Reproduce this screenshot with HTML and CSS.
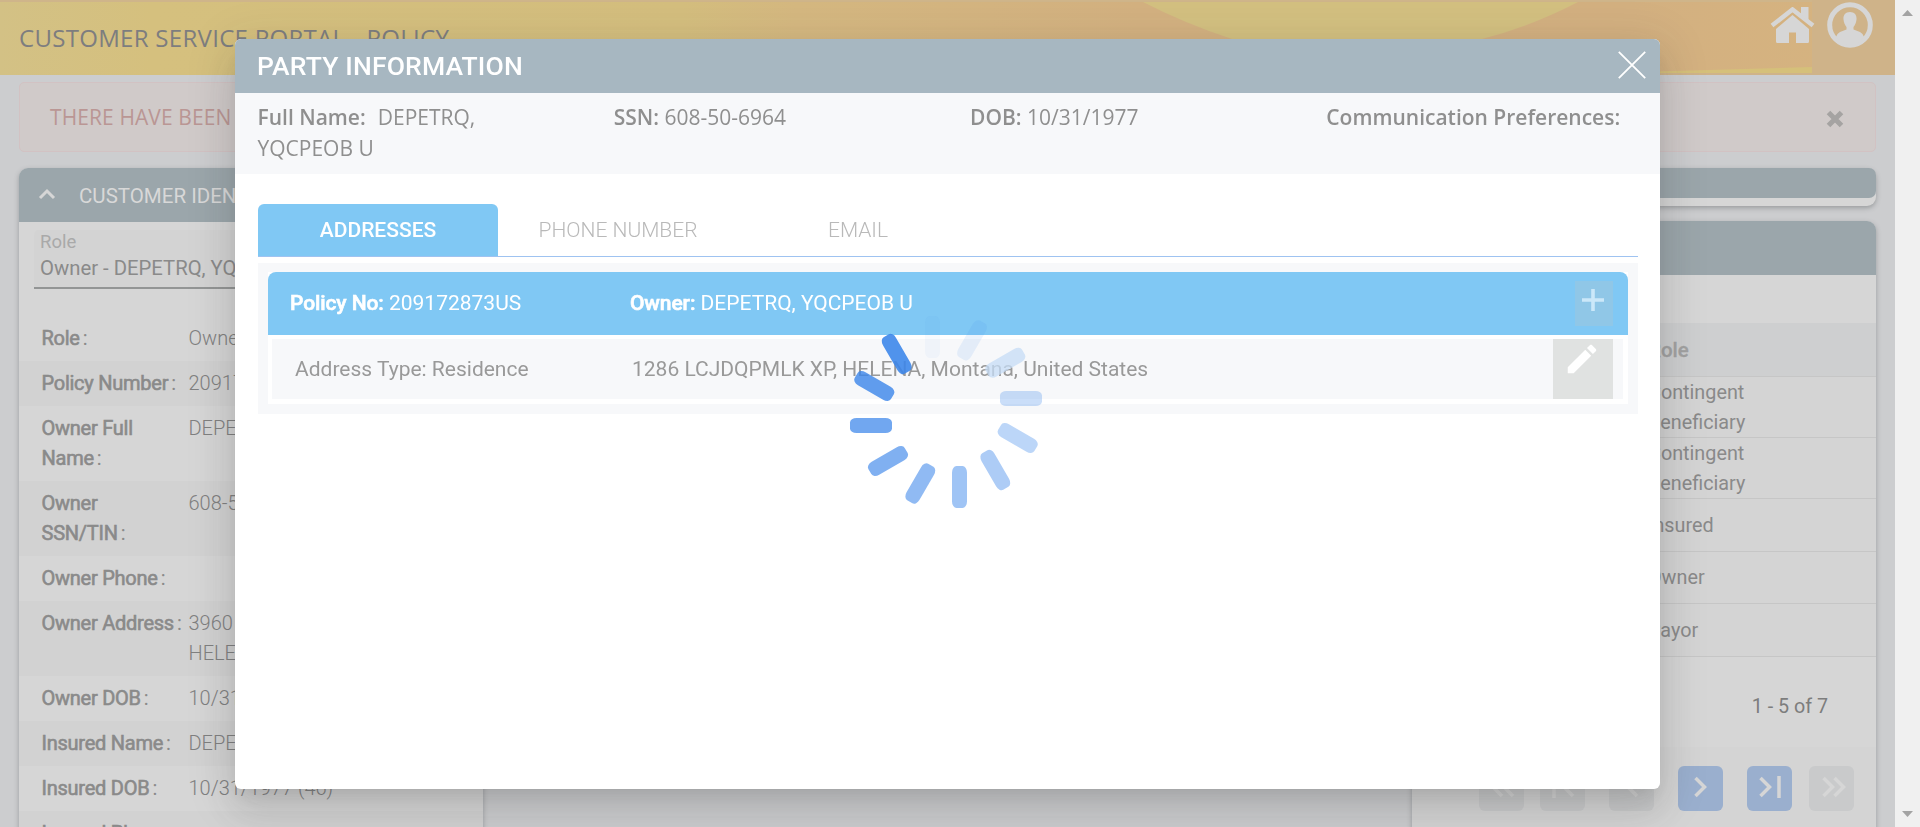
FILE: index.html
```html
<!DOCTYPE html>
<html lang="en">
<head>
<meta charset="utf-8">
<title>Customer Service Portal - Policy</title>
<link rel="stylesheet" href="styles.css">
</head>
<body>
<div class="app">
  <header class="topbar">
    <svg class="topbar-art" viewBox="0 0 1895 75" preserveAspectRatio="none" aria-hidden="true">
      <defs>
        <linearGradient id="band" x1="0" x2="1" y1="0" y2="0">
          <stop offset="0" stop-color="#d3c185"/>
          <stop offset=".08" stop-color="#d5c07e"/>
          <stop offset=".36" stop-color="#d4be7e"/>
          <stop offset=".42" stop-color="#d5b880"/>
          <stop offset=".6" stop-color="#d3b180"/>
          <stop offset=".86" stop-color="#d3b080"/>
          <stop offset="1" stop-color="#d6b480"/>
        </linearGradient>
      </defs>
      <rect width="1895" height="75" fill="url(#band)"/>
      <path d="M1143 2Q1186 24 1232 39Q1357 72 1482 39Q1532 26 1578 2Z" fill="#d3c080"/>
      <path d="M1600 73L1812 67V73Z" fill="#d5c07a"/>
      <rect width="1895" height="2" fill="#cfb58a"/>
      <rect x="1660" y="73" width="235" height="2" fill="#cfb389"/>
      <rect x="1812" width="83" height="75" fill="#cfb389"/>
    </svg>
    <h1 class="topbar-title">CUSTOMER SERVICE PORTAL - POLICY</h1>
    <nav class="topbar-icons">
      <svg width="45" height="37" viewBox="0 0 45 37"><path d="M22.500 8L6 22V34.500Q6 36 7.500 36H19V25.500H26V36H37.500Q39 36 39 34.500V22Z" fill="#d6d6d6"/><path d="M2 18.500L22.500 2.500L43 18.500" fill="none" stroke="#d6d6d6" stroke-width="4.500"/><path d="M31 0H38.500V14L31 8Z" fill="#d6d6d6"/><path d="M5 21.500L22.500 6.500L40 21.500" fill="none" stroke="#d3b180" stroke-width="1"/></svg>
      <svg width="46" height="46" viewBox="0 0 46 46"><circle cx="23" cy="23" r="20.300" fill="none" stroke="#d6d6d6" stroke-width="5"/><path d="M23 10C27.500 10 30 13 29.500 17.500C29.200 21 28 23 26.500 25V27.500L33 30Q36 31.500 37 35Q31 43 23 43Q15 43 9 35Q10 31.500 13 30L19.500 27.500V25C18 23 16.800 21 16.500 17.500C16 13 18.500 10 23 10Z" fill="#d6d6d6"/></svg>
    </nav>
  </header>

  <div class="alert">
    <span class="alert-text">THERE HAVE BEEN</span>
    <svg width="18" height="18" viewBox="0 0 18 18"><path d="M2.500 2.500L15.500 15.500M15.500 2.500L2.500 15.500" stroke="#a5a3a2" stroke-width="5"/></svg>
  </div>

  <main class="columns">
    <section class="card customer">
      <div class="card-head">
        <svg width="18" height="12" viewBox="0 0 18 12"><path d="M2 10L9 3L16 10" fill="none" stroke="#d6d6d6" stroke-width="3"/></svg>
        <h2 class="card-title">CUSTOMER IDENTIFICATION</h2>
      </div>
      <div class="select">
        <span class="select-label">Role</span>
        <span class="select-value">Owner - DEPETRQ, YQCPEOB U</span>
      </div>
      <dl class="facts">
        <div class="fact"><dt>Role<i>:</i></dt><dd>Owner</dd></div>
        <div class="fact"><dt>Policy Number<i>:</i></dt><dd>209172873US</dd></div>
        <div class="fact"><dt>Owner Full<br>Name<i>:</i></dt><dd>DEPETRQ, YQCPEOB U</dd></div>
        <div class="fact"><dt>Owner<br>SSN/TIN<i>:</i></dt><dd>608-50-6964</dd></div>
        <div class="fact"><dt>Owner Phone<i>:</i></dt><dd></dd></div>
        <div class="fact"><dt>Owner Address<i>:</i></dt><dd>3960 <br>HELENA</dd></div>
        <div class="fact"><dt>Owner DOB<i>:</i></dt><dd>10/31/1977 (46)</dd></div>
        <div class="fact"><dt>Insured Name<i>:</i></dt><dd>DEPETRQ, YQCPEOB U</dd></div>
        <div class="fact"><dt>Insured DOB<i>:</i></dt><dd>10/31/1977 (46)</dd></div>
        <div class="fact"><dt>Insured Phone<i>:</i></dt><dd></dd></div>
      </dl>
    </section>

    <div class="side">
      <section class="card collapsed"><div class="collapsed-head"></div></section>
      <section class="card roles">
        <div class="card-head"></div>
        <div class="table">
          <div class="row row-head">Role</div>
          <div class="row row-tall">Contingent<br>Beneficiary</div>
          <div class="row row-tall">Contingent<br>Beneficiary</div>
          <div class="row">Insured</div>
          <div class="row">Owner</div>
          <div class="row">Payor</div>
        </div>
        <div class="count">1 - 5 of 7</div>
        <div class="pager">
          <span class="page-btn first"><svg viewBox="0 0 45 45"><path d="M23 12L14 21L23 30M34 12L25 21L34 30"/></svg></span>
          <span class="page-btn start"><svg viewBox="0 0 45 45"><path d="M14 10V32M33 12L24 21L33 30"/></svg></span>
          <span class="page-btn prev"><svg viewBox="0 0 45 45"><path d="M28 12L19 21L28 30"/></svg></span>
          <span class="page-btn next active"><svg viewBox="0 0 45 45"><path d="M17.500 12L26.500 21L17.500 30"/></svg></span>
          <span class="page-btn end active"><svg viewBox="0 0 45 45"><path d="M13.500 12L22.500 21L13.500 30M32 10V32"/></svg></span>
          <span class="page-btn last"><svg viewBox="0 0 45 45"><path d="M14.500 12L23.500 21L14.500 30M25.500 12L34.500 21L25.500 30"/></svg></span>
        </div>
      </section>
    </div>
  </main>
</div>

<aside class="scrollbar">
  <svg width="11" height="6" viewBox="0 0 11 6"><path d="M0 6L5.500 0L11 6Z" fill="#a3a3a3"/></svg>
  <svg width="11" height="6" viewBox="0 0 11 6"><path d="M0 0L5.500 6L11 0Z" fill="#a3a3a3"/></svg>
</aside>

<div class="dialog" role="dialog">
  <div class="dialog-head">
    <h2 class="dialog-title">PARTY INFORMATION</h2>
    <svg width="28" height="28" viewBox="0 0 28 28"><path d="M.8 .8L27.200 27.200M27.200 .8L.8 27.200" stroke="#fff" stroke-width="1.800"/></svg>
  </div>
  <div class="party">
    <div class="party-cell"><b class="name-label">Full Name:</b><span class="name">DEPETRQ,<br></span><span>YQCPEOB U</span></div>
    <div class="party-cell"><b>SSN:</b> 608-50-6964</div>
    <div class="party-cell"><b>DOB:</b> 10/31/1977</div>
    <div class="party-cell"><b>Communication Preferences:</b></div>
  </div>
  <div class="tabs">
    <div class="tab selected">ADDRESSES</div>
    <div class="tab">PHONE NUMBER</div>
    <div class="tab">EMAIL</div>
  </div>
  <div class="panel">
    <div class="policy">
      <div class="policy-head">
        <span class="policy-no"><b>Policy No:</b> 209172873US</span>
        <span class="policy-owner"><b>Owner:</b> DEPETRQ, YQCPEOB U</span>
        <span class="add"><svg width="22" height="22" viewBox="0 0 22 22"><path d="M0 11H22M11 0V22" stroke="#cbe8f9" stroke-width="3.600"/></svg></span>
      </div>
      <div class="address">
        <span class="address-type">Address Type: Residence</span>
        <span class="address-text">1286 LCJDQPMLK XP, HELENA, Montana, United States</span>
        <span class="edit"><svg width="38" height="38" viewBox="0 0 24 24"><path fill="#fff" d="M3 17.250V21h3.750L17.810 9.940l-3.750-3.750L3 17.250zM20.710 7.040c.39-.39.39-1.020 0-1.410l-2.340-2.340c-.39-.39-1.020-.39-1.410 0l-1.830 1.830 3.750 3.750 1.830-1.830z"/></svg></span>
      </div>
    </div>
  </div>
</div>

<svg class="spinner" width="194" height="194" viewBox="849 315 194 194" aria-label="Loading">
  <defs><rect id="bar" x="-7.500" y="-21" width="15" height="42" rx="4.500" ry="6.500"/></defs>
  <g fill="#3c86ea">
    <use href="#bar" transform="translate(932.500 337)" opacity=".04"/>
    <use href="#bar" transform="translate(972 340.300) rotate(30)" opacity=".1"/>
    <use href="#bar" transform="translate(1005.300 362.700) rotate(60)" fill="#c6dcf5" opacity=".75"/>
    <use href="#bar" transform="translate(1021 398.500) rotate(90)" opacity=".27"/>
    <use href="#bar" transform="translate(1017.700 438) rotate(120)" opacity=".34"/>
    <use href="#bar" transform="translate(995.300 470) rotate(150)" opacity=".42"/>
    <use href="#bar" transform="translate(959.500 487)" opacity=".49"/>
    <use href="#bar" transform="translate(920.300 483.500) rotate(30)" opacity=".57"/>
    <use href="#bar" transform="translate(888 461) rotate(60)" opacity=".65"/>
    <use href="#bar" transform="translate(871 425.500) rotate(90)" opacity=".73"/>
    <use href="#bar" transform="translate(874.300 386) rotate(120)" opacity=".81"/>
    <use href="#bar" transform="translate(896.700 354) rotate(150)" opacity=".89"/>
  </g>
</svg>
</body>
</html>
```
FILE: styles.css
```css
* { box-sizing: border-box; }
html, body { margin: 0; height: 827px; overflow: hidden; }
body { display: flex; background: #cccdcf; color: #8a8a8a; font: 20px/30px Roboto, sans-serif; }
h1, h2, dl, dd { margin: 0; font-weight: 400; }
svg { display: block; flex: none; }

.app { width: 1895px; height: 827px; overflow: hidden; }
.scrollbar { width: 25px; height: 827px; background: #f0f0f0; padding: 10px 0 10px 7px; display: flex; flex-direction: column; justify-content: space-between; }

.topbar { position: relative; height: 75px; display: flex; justify-content: space-between; padding: 0 22px 0 19px; }
.topbar-art { position: absolute; inset: 0; width: 100%; height: 100%; }
.topbar-title { position: relative; padding-top: 23px; font: 24px/30px "Open Sans", sans-serif; letter-spacing: .3px; color: #7d7d7f; white-space: nowrap; }
.topbar-icons { position: relative; display: flex; gap: 12px; padding-top: 2px; }
.topbar-icons svg:first-child { margin-top: 5px; }

.alert { margin: 7px 19px 16px; height: 70px; padding: 0 31px 0 30px; display: flex; align-items: center; justify-content: space-between; border: 1px solid #d2c2c3; border-radius: 5px; background: #d0cac9; }
.alert-text { font: 21px/30px "Open Sans", sans-serif; letter-spacing: .1px; color: #ba9694; white-space: nowrap; }
.alert svg { margin-top: 3px; }

.columns { display: flex; justify-content: space-between; padding: 0 19px; }
.card { background: #d6d6d6; border-radius: 9px; box-shadow: 0 2px 5px rgba(60, 65, 70, .35); }
.card-head { height: 54px; display: flex; align-items: center; background: #9ba6ab; border-radius: 9px 9px 0 0; }
.customer { width: 464px; height: 800px; }
.customer .card-head { padding: 2px 0 0 19px; gap: 23px; }
.customer .card-head svg { margin-top: -5px; }
.card-title { font-size: 20.500px; color: #d8d8d8; white-space: nowrap; }
.select { margin: 8px 15px 0; height: 59px; padding: 0 6px; display: flex; flex-direction: column; background: #d3d3d3; border-bottom: 2px solid #939595; border-radius: 5px 5px 0 0; }
.select-label { font-size: 18.500px; line-height: 24px; color: #a9a9a9; }
.select-value { font-size: 20.300px; line-height: 28px; }
.facts { padding-top: 26.500px; }
.fact { display: grid; grid-template-columns: 147px 1fr; padding: 7.500px 0 7.500px 22.500px; white-space: nowrap; }
.fact:nth-child(even) { background: #d2d2d2; }
dt { font-weight: 400; letter-spacing: -.25px; -webkit-text-stroke: .6px #8a8a8a; }
dt i { font-style: normal; padding-left: 3px; -webkit-text-stroke: 0; }
dd { font-weight: 300; color: #808080; }

.side { width: 464px; }
.collapsed { height: 38px; margin-bottom: 15px; }
.collapsed-head { height: 30px; background: #9ba6ab; border-radius: 7px; }
.roles { height: 700px; }
.table { padding-top: 48px; }
.row { height: 52.500px; padding: 2px 0 0 236px; display: flex; align-items: center; border-bottom: 1px solid #c6c6c6; background: #d4d4d4; font-weight: 400; font-size: 19.800px; color: #8a8a8a; }
.row-head { height: 54px; padding-top: 0; background: #cecfd0; font-weight: 500; font-size: 20.500px; color: #a2a2a2; -webkit-text-stroke: .3px #a2a2a2; }
.row-tall { height: 61px; }
.count { padding: 35px 48px 25px 0; text-align: right; font-size: 19.700px; color: #7d7d7d; }
.pager { display: flex; padding: 19px 22px 0 67px; background: #d4d4d4; height: 90px; }
.page-btn { width: 45px; height: 45px; border-radius: 6px; background: #c9cacb; }
.page-btn svg { width: 45px; height: 45px; fill: none; stroke: #d6d6d6; stroke-width: 3.500px; }
.page-btn.active { background: #9aafce; }
.start { margin-left: 16px; }
.prev, .next, .end { margin-left: 24px; }
.last { margin-left: 17px; }

.dialog { position: fixed; left: 235px; top: 39px; width: 1425px; height: 750px; background: #fff; border-radius: 6px; box-shadow: 0 11px 15px -7px rgba(60, 60, 60, .14), 0 24px 38px 3px rgba(60, 60, 60, .1), 0 9px 46px 8px rgba(60, 60, 60, .1); }
.dialog-head { height: 54px; padding: 0 14px 0 22px; display: flex; align-items: center; justify-content: space-between; background: #a7b7c1; border-radius: 6px 6px 0 0; }
.dialog-head svg { margin-top: -2px; }
.dialog-title { font-size: 26.500px; font-weight: 500; letter-spacing: .15px; color: #fff; }
.party { height: 81px; padding-top: 9px; display: grid; grid-template-columns: repeat(4, 356.250px); background: #f7f8fa; font: 21px/31px "Open Sans", sans-serif; color: #8f8f8f; }
.party-cell { padding-left: 22.500px; white-space: nowrap; }
.party b { font-weight: 600; }
.name { padding-left: 12px; }
.tabs { margin: 30px 22px 6px 23px; height: 53px; display: flex; border-bottom: 1px solid #9fc3f1; }
.tab { width: 240px; height: 52px; line-height: 52px; text-align: center; color: #b9b9b9; font-weight: 300; font-size: 21px; }
.tab.selected { background: #80c8f4; color: #fff; font-weight: 500; border-radius: 6px 6px 0 0; }
.panel { margin: 0 22px 0 23px; height: 151px; padding: 9px 10px 10px; background: #f7f8fa; }
.policy { height: 132px; background: #fff; }
.policy-head { height: 63px; display: flex; align-items: center; padding: 0 15px 0 22px; background: #80c8f4; border-radius: 8px 8px 0 0; color: #fff; font-size: 21px; white-space: nowrap; }
.policy-head b { font-weight: 500; letter-spacing: -.1px; -webkit-text-stroke: .6px #fff; }
.policy-no { width: 340px; margin-top: -2px; }
.policy-owner { flex: 1; margin-top: -2px; }
.add { width: 38px; height: 45px; padding: 8px 0 0 7px; background: #90c7e7; }
.address { margin: 4px 5px 0 4px; height: 60px; display: flex; align-items: center; padding: 0 10px 0 23px; background: #f7f8fa; font-size: 21px; color: #999; white-space: nowrap; }
.address-type { width: 337px; }
.address-text { flex: 1; }
.edit { width: 60px; height: 60px; padding: 1px 0 0 10px; background: #e0e2e1; }

.spinner { position: fixed; left: 849px; top: 315px; }
```
